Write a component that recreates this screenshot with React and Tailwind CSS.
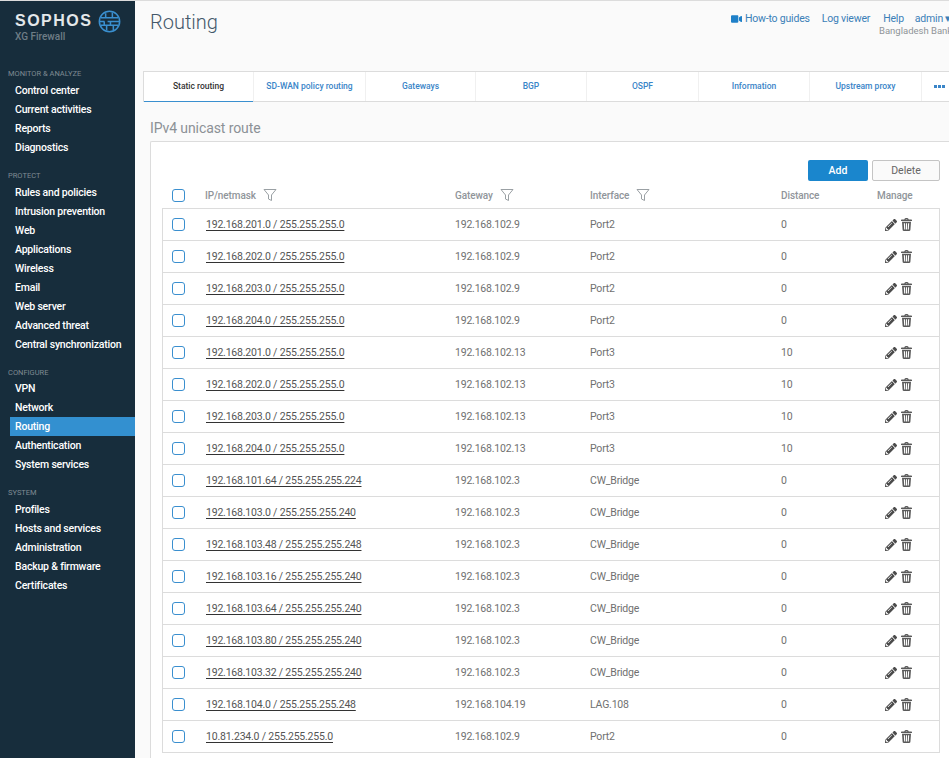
import { FaVideo, FaPencilAlt } from "react-icons/fa"

const menu = [
  { title: "MONITOR & ANALYZE", items: ["Control center", "Current activities", "Reports", "Diagnostics"] },
  { title: "PROTECT", items: ["Rules and policies", "Intrusion prevention", "Web", "Applications", "Wireless", "Email", "Web server", "Advanced threat", "Central synchronization"] },
  { title: "CONFIGURE", items: ["VPN", "Network", "Routing", "Authentication", "System services"], listClass: "-mt-px" },
  { title: "SYSTEM", items: ["Profiles", "Hosts and services", "Administration", "Backup & firmware", "Certificates"] },
]

const tabs = [
  { label: "SD-WAN policy routing", w: "w-[112px]" },
  { label: "Gateways", w: "w-[110px]" },
  { label: "BGP", w: "w-[111px]" },
  { label: "OSPF", w: "w-[112px]" },
  { label: "Information", w: "w-[111px]" },
  { label: "Upstream proxy", w: "w-[112px]" },
]

const routes = [
  ["192.168.201.0 / 255.255.255.0", "192.168.102.9", "Port2", "0"],
  ["192.168.202.0 / 255.255.255.0", "192.168.102.9", "Port2", "0"],
  ["192.168.203.0 / 255.255.255.0", "192.168.102.9", "Port2", "0"],
  ["192.168.204.0 / 255.255.255.0", "192.168.102.9", "Port2", "0"],
  ["192.168.201.0 / 255.255.255.0", "192.168.102.13", "Port3", "10"],
  ["192.168.202.0 / 255.255.255.0", "192.168.102.13", "Port3", "10"],
  ["192.168.203.0 / 255.255.255.0", "192.168.102.13", "Port3", "10"],
  ["192.168.204.0 / 255.255.255.0", "192.168.102.13", "Port3", "10"],
  ["192.168.101.64 / 255.255.255.224", "192.168.102.3", "CW_Bridge", "0"],
  ["192.168.103.0 / 255.255.255.240", "192.168.102.3", "CW_Bridge", "0"],
  ["192.168.103.48 / 255.255.255.248", "192.168.102.3", "CW_Bridge", "0"],
  ["192.168.103.16 / 255.255.255.240", "192.168.102.3", "CW_Bridge", "0"],
  ["192.168.103.64 / 255.255.255.240", "192.168.102.3", "CW_Bridge", "0"],
  ["192.168.103.80 / 255.255.255.240", "192.168.102.3", "CW_Bridge", "0"],
  ["192.168.103.32 / 255.255.255.240", "192.168.102.3", "CW_Bridge", "0"],
  ["192.168.104.0 / 255.255.255.248", "192.168.104.19", "LAG.108", "0"],
  ["10.81.234.0 / 255.255.255.0", "192.168.102.9", "Port2", "0"],
]

function Globe() {
  return (
    <svg width="23" height="23" viewBox="0 0 24 24" fill="none" stroke="#3a8fcf" strokeWidth="1.6">
      <circle cx="12" cy="12" r="10.6" />
      <path d="M3 8h18M1.800 12h5M10 12h12M3 16h18M8 3.500v4.500M15 2.500v5.500M6.500 12v4M13 12v4M9 16v5M16 16v5" />
    </svg>
  )
}

function Funnel() {
  return (
    <svg width="14" height="14" viewBox="0 0 14 14" fill="none" stroke="#9aa0a4" strokeWidth="1">
      <path d="M1 1.500h12L8.500 7v5.500l-3-1.500V7z" />
    </svg>
  )
}

function Trash() {
  return (
    <svg width="11" height="13" viewBox="0 0 11 13" fill="#5a5a5a">
      <path d="M3.300 1.500C3.500.5 4.200 0 5.500 0s2 .5 2.200 1.500h2.600c.4 0 .7.300.7.700v.8H0v-.8c0-.4.300-.7.700-.7zM4.400 1.500h2.200c-.1-.4-.5-.6-1.100-.6s-1 .2-1.100.6z" />
      <path fillRule="evenodd" d="M1 3.800h9l-.6 8c0 .7-.4 1.200-1.100 1.200H2.700c-.7 0-1.100-.5-1.100-1.200zM2.800 5.200l.4 6.300h1.100l-.3-6.300zM4.950 5.200v6.300h1.100V5.200zM7.100 5.200l-.4 6.300h1.100l.4-6.300z" />
    </svg>
  )
}

function Checkbox() {
  return <span className="block w-[13px] h-[13px] rounded-[3px] border-[1.5px] border-[#3a8fcf] bg-white" />
}

function Sidebar() {
  return (
    <aside className="w-[135px] shrink-0 bg-[#172d3c] h-full">
      <div className="h-[66px] pt-[8px] pl-[15px]">
        <div className="flex items-center gap-[6px]">
          <span className="text-[#e4e8ea] text-[16px] leading-[24px] font-bold tracking-[1.500px] font-['Liberation_Sans',sans-serif]">SOPHOS</span>
          <Globe />
        </div>
        <div className="text-[#6f7d86] text-[10px] leading-[11px] -mt-[2px] font-medium">XG Firewall</div>
      </div>
      <nav>
        {menu.map((group) => (
          <div key={group.title} className="mb-[12px]">
            <div className="pl-2 text-[7.500px] leading-[14px] text-[#7f8b93]">{group.title}</div>
            <ul className={group.listClass}>
              {group.items.map((item) => (
                <li
                  key={item}
                  className={`ml-[10px] pl-[5px] h-[19px] leading-[19px] text-[10.500px] tracking-[-0.2px] font-medium text-white whitespace-nowrap ${item === "Routing" ? "bg-[#3390d0]" : ""}`}
                >
                  {item}
                </li>
              ))}
            </ul>
          </div>
        ))}
      </nav>
    </aside>
  )
}

function Header() {
  return (
    <header className="h-[70px] flex justify-between pl-[15px]">
      <h1 className="text-[20px] leading-[24px] pt-[9px] text-[#44586a] font-light">Routing</h1>
      <div className="text-[10.500px] tracking-[-0.2px] text-[#3a7fb8] whitespace-nowrap w-[218px] shrink-0 pt-[12px]">
        <div className="flex items-center leading-[12px]">
          <FaVideo className="w-[11px] h-[10px] shrink-0 text-[#1f80c8] mr-[3px]" />
          <span>How-to guides</span>
          <span className="ml-[12px]">Log viewer</span>
          <span className="ml-[13px]">Help</span>
          <span className="ml-[11px]">admin ▾</span>
        </div>
        <div className="text-[9.500px] tracking-normal text-[#8f9498] leading-[12px] pl-[148px]">Bangladesh Bank</div>
      </div>
    </header>
  )
}

function Tabs() {
  return (
    <div className="ml-[8px] h-[31px] flex bg-white border-y border-[#dcdcdc] border-l text-[8.500px] font-medium text-[#3a85c8]">
      <div className="w-[109px] shrink-0 flex items-center justify-center text-[#333] border-b-[1.5px] border-b-[#3a8fcf] -mb-px">Static routing</div>
      {tabs.map((t) => (
        <div key={t.label} className={`${t.w} shrink-0 flex items-center justify-center border-l border-[#f0f0f0] whitespace-nowrap`}>
          {t.label}
        </div>
      ))}
      <div className="flex-1 border-l border-[#f0f0f0] flex items-center gap-px pl-[12px]">
        <span className="w-[3px] h-[3px] shrink-0 bg-[#3a85c8]" />
        <span className="w-[3px] h-[3px] shrink-0 bg-[#3a85c8]" />
        <span className="w-[3px] h-[3px] shrink-0 bg-[#3a85c8]" />
      </div>
    </div>
  )
}

function RouteRow({ route }) {
  return (
    <div className="flex items-center h-[32px] border-b border-[#dcdcdc] text-[10.500px] tracking-[-0.2px] text-[#707070]">
      <div className="w-[43px] pl-[9px] shrink-0"><Checkbox /></div>
      <div className="w-[249px] shrink-0 text-[#555] underline decoration-[#333] underline-offset-2 whitespace-nowrap">{route[0]}</div>
      <div className="w-[135px] shrink-0">{route[1]}</div>
      <div className="w-[191px] shrink-0">{route[2]}</div>
      <div className="w-[104px] shrink-0">{route[3]}</div>
      <div className="flex items-center gap-[4px]">
        <FaPencilAlt className="w-[12px] h-[12px] shrink-0 text-[#4b4b4b]" />
        <Trash />
      </div>
    </div>
  )
}

function RouteTable() {
  return (
    <section className="ml-[15px] mt-[5px] h-[640px] bg-white border-t border-l border-[#dcdcdc] rounded-tl-[2px] pl-[11px] pr-[9px]">
      <div className="flex justify-end gap-[4px] pt-[18px]">
        <button className="w-[60px] h-[21px] bg-[#1a86cd] rounded-[2px] text-white text-[10.500px] font-medium">Add</button>
        <button className="w-[68px] h-[21px] bg-[#fafafa] border border-[#c4c4c4] rounded-[2px] text-[#666] text-[10.500px]">Delete</button>
      </div>
      <div className="flex items-center h-[27px] pt-[1px] text-[10px] tracking-[-0.1px] text-[#90959a] font-medium">
        <div className="w-[43px] pl-[10px] shrink-0"><Checkbox /></div>
        <div className="w-[250px] shrink-0 flex items-center gap-[7px]">IP/netmask <Funnel /></div>
        <div className="w-[135px] shrink-0 flex items-center gap-[7px]">Gateway <Funnel /></div>
        <div className="w-[191px] shrink-0 flex items-center gap-[7px]">Interface <Funnel /></div>
        <div className="w-[96px] shrink-0">Distance</div>
        <div>Manage</div>
      </div>
      <div className="border-t border-l border-r border-[#dcdcdc]">
        {routes.map((route, i) => (
          <RouteRow key={i} route={route} />
        ))}
      </div>
    </section>
  )
}

export default function App() {
  return (
    <div className="w-[949px] h-[758px] overflow-hidden flex bg-[#fafafa] border-t border-[#dcdcdc] font-['Roboto',sans-serif]">
      <Sidebar />
      <main className="flex-1 min-w-0">
        <Header />
        <Tabs />
        <h2 className="ml-[15px] mt-[18px] text-[14px] tracking-[-0.1px] leading-[16px] text-[#8c9196]">IPv4 unicast route</h2>
        <RouteTable />
      </main>
    </div>
  )
}
